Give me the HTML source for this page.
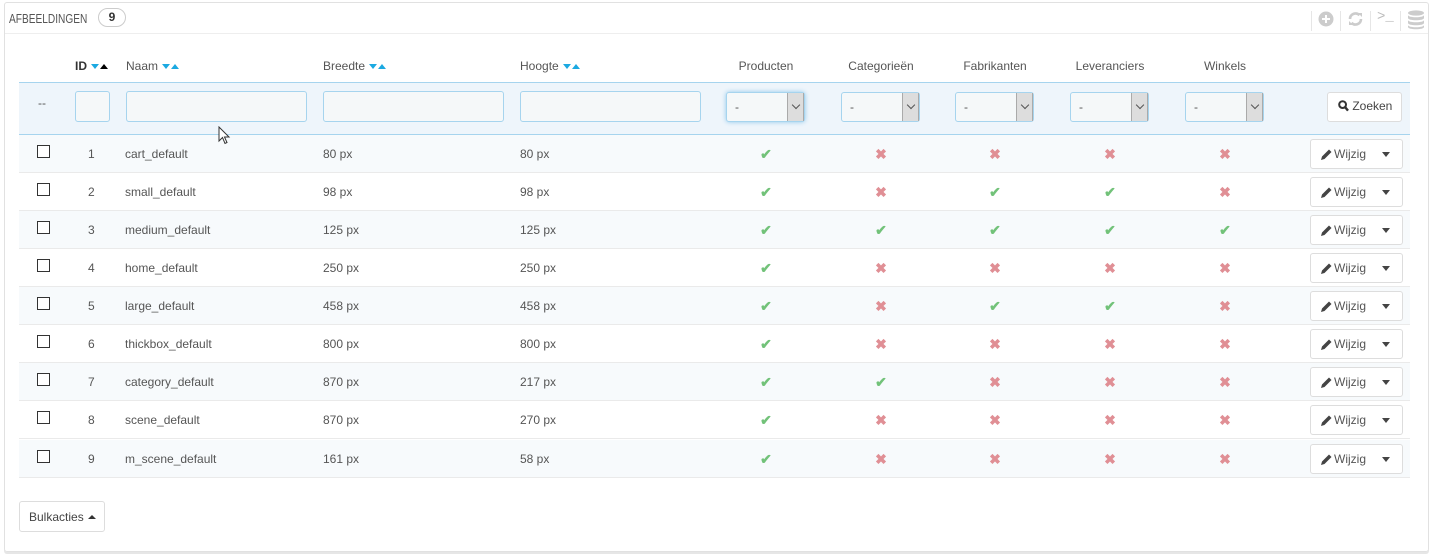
<!DOCTYPE html>
<html><head><meta charset="utf-8"><style>
*{box-sizing:border-box;margin:0;padding:0}
body{width:1431px;height:555px;background:#fff;font-family:"Liberation Sans",sans-serif;font-size:12px;color:#555;position:relative;overflow:hidden}
.a{position:absolute}
.panel{left:4px;top:2px;width:1425px;height:550px;border:1px solid #e1e1e1;border-radius:3px;box-shadow:0 2px 0 #e6e6e6}
.hd{font-size:13px;color:#555;left:9px;top:11px;transform:scaleX(0.78);transform-origin:0 0;white-space:nowrap}
.badge{left:98px;top:8px;width:28px;height:19px;border:1px solid #ccc;border-radius:10px;font-weight:bold;text-align:center;line-height:17px;font-size:12px;color:#333}
.th{top:59px;font-size:12px;color:#555}
.inp{top:91px;height:31px;border:1px solid #a6d4ee;border-radius:3px;background:#f5f8f9}
.sel{top:92px;height:30px;width:79px;border:1px solid #a6d4ee;border-radius:3px;background:#f5f8f9}
.sel span{position:absolute;left:8px;top:7px;color:#555}
.sel i{position:absolute;right:0;top:0;width:17px;height:28px;background:#ddd;border-left:1px solid #aaa;border-right:1px solid #aaa}
.sel i:after{content:"";position:absolute;left:5px;top:9px;width:5px;height:5px;border-right:1px solid #555;border-bottom:1px solid #555;transform:rotate(45deg)}
.row{left:19px;width:1391px;height:38px;border-bottom:1px solid #eaeaea}
.odd{background:#f7fafc}
.cb{width:13px;height:13px;border:1px solid #333;left:37px;background:#fff}
.c{width:60px;text-align:center;font-weight:bold;font-size:14px}
.ok{color:#72c279}.no{color:#e08f95}
.btn{left:1310px;width:93px;height:30px;border:1px solid #ddd;border-radius:3px;background:#fff;color:#555}
.btn b{position:absolute;left:23px;top:7px;font-weight:normal;font-size:12px}
.btn em{position:absolute;left:71px;top:12px;border-left:4px solid transparent;border-right:4px solid transparent;border-top:5px solid #444}
.tri{display:inline-block;width:0;height:0;border-left:4px solid transparent;border-right:4px solid transparent;vertical-align:middle;margin-left:1px}
.dn{border-top:5px solid #1ba9e1}.up{border-bottom:5px solid #1ba9e1}
.tb{top:11px;width:1px;height:20px;background:#e6e6e6}
</style></head><body>
<div class="a panel"></div>
<div class="a hd">AFBEELDINGEN</div>
<div class="a badge">9</div>
<div class="a" style="left:5px;top:33px;width:1423px;height:1px;background:#eee"></div>
<div class="a tb" style="left:1311px"></div><div class="a tb" style="left:1340px"></div><div class="a tb" style="left:1370px"></div><div class="a tb" style="left:1400px"></div>
<svg class="a" style="left:1318px;top:11px" width="16" height="16"><circle cx="8" cy="8" r="7.5" fill="#ccc"/><rect x="7" y="4" width="2" height="8" fill="#fff"/><rect x="4" y="7" width="8" height="2" fill="#fff"/></svg>
<svg class="a" style="left:1347px;top:11px" width="17" height="16"><path d="M3 8a5.5 5.5 0 0 1 9.5-3.8M14 8a5.5 5.5 0 0 1-9.5 3.8" stroke="#ccc" stroke-width="2.6" fill="none"/><path d="M11 2h4v4zM6 14H2v-4z" fill="#ccc"/></svg>
<div class="a" style="left:1377px;top:9px;color:#bbb;font-size:14px;font-family:'Liberation Mono',monospace">&gt;_</div>
<svg class="a" style="left:1407px;top:10px" width="18" height="20"><ellipse cx="9" cy="3" rx="8" ry="2.6" fill="#ccc"/><path d="M1 5c0 3 16 3 16 0v3c0 3-16 3-16 0zM1 10c0 3 16 3 16 0v3c0 3-16 3-16 0zM1 15c0 3 16 3 16 0v2c0 3-16 3-16 0z" fill="#ccc"/></svg>

<div class="a th" style="left:75px;font-weight:bold;color:#333">ID <span class="tri dn"></span><span class="tri" style="border-bottom:5px solid #000"></span></div>
<div class="a th" style="left:126px">Naam <span class="tri dn"></span><span class="tri up"></span></div>
<div class="a th" style="left:323px">Breedte <span class="tri dn"></span><span class="tri up"></span></div>
<div class="a th" style="left:520px">Hoogte <span class="tri dn"></span><span class="tri up"></span></div>
<div class="a th" style="left:736px;width:60px;text-align:center">Producten</div>
<div class="a th" style="left:841px;width:80px;text-align:center">Categorieën</div>
<div class="a th" style="left:955px;width:80px;text-align:center">Fabrikanten</div>
<div class="a th" style="left:1070px;width:80px;text-align:center">Leveranciers</div>
<div class="a th" style="left:1185px;width:80px;text-align:center">Winkels</div>

<div class="a" style="left:19px;top:82px;width:1391px;height:53px;background:#eef5fb;border-top:1px solid #a6d4ee;border-bottom:1px solid #a6d4ee"></div>
<div class="a" style="left:38px;top:96px">--</div>
<div class="a inp" style="left:75px;width:35px"></div>
<div class="a inp" style="left:126px;width:181px"></div>
<div class="a inp" style="left:323px;width:181px"></div>
<div class="a inp" style="left:520px;width:181px"></div>
<div class="a sel" style="left:726px;box-shadow:0 0 5px #8ec7ec"><span>-</span><i></i></div>
<div class="a sel" style="left:841px"><span>-</span><i></i></div>
<div class="a sel" style="left:955px"><span>-</span><i></i></div>
<div class="a sel" style="left:1070px"><span>-</span><i></i></div>
<div class="a sel" style="left:1185px"><span>-</span><i></i></div>
<div class="a" style="left:1327px;top:92px;width:75px;height:30px;border:1px solid #ddd;border-radius:3px;background:#fff;color:#444;padding:6px 0 0 10px;font-size:12px"><svg width="11" height="12" style="vertical-align:-2px"><circle cx="4.6" cy="4.6" r="3.4" stroke="#333" stroke-width="2" fill="none"/><path d="M7 7l3 3.6" stroke="#333" stroke-width="2.4"/></svg> Zoeken</div>

<div class="a row odd" style="top:135px"></div><div class="a row" style="top:173px"></div><div class="a row odd" style="top:211px"></div><div class="a row" style="top:249px"></div><div class="a row odd" style="top:287px"></div><div class="a row" style="top:325px"></div><div class="a row odd" style="top:363px"></div><div class="a row" style="top:401px"></div><div class="a row odd" style="top:440px"></div>

<div class="a cb" style="top:145px"></div><div class="a" style="left:88px;top:147px">1</div><div class="a" style="left:125px;top:147px">cart_default</div><div class="a" style="left:323px;top:147px">80 px</div><div class="a" style="left:520px;top:147px">80 px</div>
<div class="a cb" style="top:183px"></div><div class="a" style="left:88px;top:185px">2</div><div class="a" style="left:125px;top:185px">small_default</div><div class="a" style="left:323px;top:185px">98 px</div><div class="a" style="left:520px;top:185px">98 px</div>
<div class="a cb" style="top:221px"></div><div class="a" style="left:88px;top:223px">3</div><div class="a" style="left:125px;top:223px">medium_default</div><div class="a" style="left:323px;top:223px">125 px</div><div class="a" style="left:520px;top:223px">125 px</div>
<div class="a cb" style="top:259px"></div><div class="a" style="left:88px;top:261px">4</div><div class="a" style="left:125px;top:261px">home_default</div><div class="a" style="left:323px;top:261px">250 px</div><div class="a" style="left:520px;top:261px">250 px</div>
<div class="a cb" style="top:297px"></div><div class="a" style="left:88px;top:299px">5</div><div class="a" style="left:125px;top:299px">large_default</div><div class="a" style="left:323px;top:299px">458 px</div><div class="a" style="left:520px;top:299px">458 px</div>
<div class="a cb" style="top:335px"></div><div class="a" style="left:88px;top:337px">6</div><div class="a" style="left:125px;top:337px">thickbox_default</div><div class="a" style="left:323px;top:337px">800 px</div><div class="a" style="left:520px;top:337px">800 px</div>
<div class="a cb" style="top:373px"></div><div class="a" style="left:88px;top:375px">7</div><div class="a" style="left:125px;top:375px">category_default</div><div class="a" style="left:323px;top:375px">870 px</div><div class="a" style="left:520px;top:375px">217 px</div>
<div class="a cb" style="top:411px"></div><div class="a" style="left:88px;top:413px">8</div><div class="a" style="left:125px;top:413px">scene_default</div><div class="a" style="left:323px;top:413px">870 px</div><div class="a" style="left:520px;top:413px">270 px</div>
<div class="a cb" style="top:450px"></div><div class="a" style="left:88px;top:452px">9</div><div class="a" style="left:125px;top:452px">m_scene_default</div><div class="a" style="left:323px;top:452px">161 px</div><div class="a" style="left:520px;top:452px">58 px</div>

<div class="a c ok" style="left:736px;top:146px">✔</div><div class="a c no" style="left:851px;top:146px">✖</div><div class="a c no" style="left:965px;top:146px">✖</div><div class="a c no" style="left:1080px;top:146px">✖</div><div class="a c no" style="left:1195px;top:146px">✖</div>
<div class="a c ok" style="left:736px;top:184px">✔</div><div class="a c no" style="left:851px;top:184px">✖</div><div class="a c ok" style="left:965px;top:184px">✔</div><div class="a c ok" style="left:1080px;top:184px">✔</div><div class="a c no" style="left:1195px;top:184px">✖</div>
<div class="a c ok" style="left:736px;top:222px">✔</div><div class="a c ok" style="left:851px;top:222px">✔</div><div class="a c ok" style="left:965px;top:222px">✔</div><div class="a c ok" style="left:1080px;top:222px">✔</div><div class="a c ok" style="left:1195px;top:222px">✔</div>
<div class="a c ok" style="left:736px;top:260px">✔</div><div class="a c no" style="left:851px;top:260px">✖</div><div class="a c no" style="left:965px;top:260px">✖</div><div class="a c no" style="left:1080px;top:260px">✖</div><div class="a c no" style="left:1195px;top:260px">✖</div>
<div class="a c ok" style="left:736px;top:298px">✔</div><div class="a c no" style="left:851px;top:298px">✖</div><div class="a c ok" style="left:965px;top:298px">✔</div><div class="a c ok" style="left:1080px;top:298px">✔</div><div class="a c no" style="left:1195px;top:298px">✖</div>
<div class="a c ok" style="left:736px;top:336px">✔</div><div class="a c no" style="left:851px;top:336px">✖</div><div class="a c no" style="left:965px;top:336px">✖</div><div class="a c no" style="left:1080px;top:336px">✖</div><div class="a c no" style="left:1195px;top:336px">✖</div>
<div class="a c ok" style="left:736px;top:374px">✔</div><div class="a c ok" style="left:851px;top:374px">✔</div><div class="a c no" style="left:965px;top:374px">✖</div><div class="a c no" style="left:1080px;top:374px">✖</div><div class="a c no" style="left:1195px;top:374px">✖</div>
<div class="a c ok" style="left:736px;top:412px">✔</div><div class="a c no" style="left:851px;top:412px">✖</div><div class="a c no" style="left:965px;top:412px">✖</div><div class="a c no" style="left:1080px;top:412px">✖</div><div class="a c no" style="left:1195px;top:412px">✖</div>
<div class="a c ok" style="left:736px;top:451px">✔</div><div class="a c no" style="left:851px;top:451px">✖</div><div class="a c no" style="left:965px;top:451px">✖</div><div class="a c no" style="left:1080px;top:451px">✖</div><div class="a c no" style="left:1195px;top:451px">✖</div>

<div class="a btn" style="top:139px"><svg class="a" style="left:9px;top:8px" width="13" height="13"><path d="M1 12l1-3.5L9 1.5l2.5 2.5L4.5 11z" fill="#444"/></svg><b>Wijzig</b><em></em></div>
<div class="a btn" style="top:177px"><svg class="a" style="left:9px;top:8px" width="13" height="13"><path d="M1 12l1-3.5L9 1.5l2.5 2.5L4.5 11z" fill="#444"/></svg><b>Wijzig</b><em></em></div>
<div class="a btn" style="top:215px"><svg class="a" style="left:9px;top:8px" width="13" height="13"><path d="M1 12l1-3.5L9 1.5l2.5 2.5L4.5 11z" fill="#444"/></svg><b>Wijzig</b><em></em></div>
<div class="a btn" style="top:253px"><svg class="a" style="left:9px;top:8px" width="13" height="13"><path d="M1 12l1-3.5L9 1.5l2.5 2.5L4.5 11z" fill="#444"/></svg><b>Wijzig</b><em></em></div>
<div class="a btn" style="top:291px"><svg class="a" style="left:9px;top:8px" width="13" height="13"><path d="M1 12l1-3.5L9 1.5l2.5 2.5L4.5 11z" fill="#444"/></svg><b>Wijzig</b><em></em></div>
<div class="a btn" style="top:329px"><svg class="a" style="left:9px;top:8px" width="13" height="13"><path d="M1 12l1-3.5L9 1.5l2.5 2.5L4.5 11z" fill="#444"/></svg><b>Wijzig</b><em></em></div>
<div class="a btn" style="top:367px"><svg class="a" style="left:9px;top:8px" width="13" height="13"><path d="M1 12l1-3.5L9 1.5l2.5 2.5L4.5 11z" fill="#444"/></svg><b>Wijzig</b><em></em></div>
<div class="a btn" style="top:405px"><svg class="a" style="left:9px;top:8px" width="13" height="13"><path d="M1 12l1-3.5L9 1.5l2.5 2.5L4.5 11z" fill="#444"/></svg><b>Wijzig</b><em></em></div>
<div class="a btn" style="top:444px"><svg class="a" style="left:9px;top:8px" width="13" height="13"><path d="M1 12l1-3.5L9 1.5l2.5 2.5L4.5 11z" fill="#444"/></svg><b>Wijzig</b><em></em></div>

<div class="a" style="left:19px;top:501px;width:86px;height:31px;border:1px solid #ddd;border-radius:3px;background:#fff;color:#444;padding:8px 0 0 9px;font-size:12px">Bulkacties <span class="tri" style="border-bottom:4px solid #333;vertical-align:2px"></span></div>

<svg class="a" style="left:218px;top:126px" width="14" height="20"><path d="M1 1v14l3.5-3.5 2.5 6 2-1-2.5-5.5H11z" fill="#fff" stroke="#333" stroke-width="1"/></svg>
</body></html>
